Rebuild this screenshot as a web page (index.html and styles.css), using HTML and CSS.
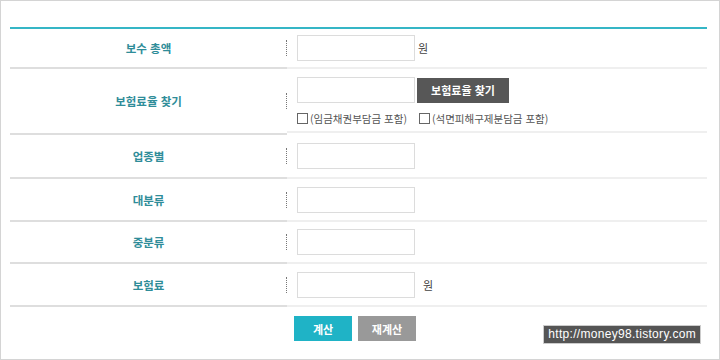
FILE: index.html
```html
<!DOCTYPE html>
<html lang="ko">
<head>
  <meta charset="UTF-8" />
  <title>보험료 계산</title>
  <link rel="stylesheet" href="styles.css">
</head>
<body>
  <div class="frame">
    <div class="calc">
      <div class="row r1">
        <div class="th">보수 총액</div>
        <div class="td"><input type="text" class="inp"><span class="unit">원</span></div>
      </div>
      <div class="row r2">
        <div class="th">보험료율 찾기</div>
        <div class="td">
          <div class="line"><input type="text" class="inp"><button type="button" class="find-btn">보험료율 찾기</button></div>
          <div class="checks">
            <label class="chk"><input type="checkbox"><span>(임금채권부담금 포함)</span></label>
            <label class="chk"><input type="checkbox"><span>(석면피해구제분담금 포함)</span></label>
          </div>
        </div>
      </div>
      <div class="row r3">
        <div class="th">업종별</div>
        <div class="td"><input type="text" class="inp"></div>
      </div>
      <div class="row r4">
        <div class="th">대분류</div>
        <div class="td"><input type="text" class="inp"></div>
      </div>
      <div class="row r5">
        <div class="th">중분류</div>
        <div class="td"><input type="text" class="inp"></div>
      </div>
      <div class="row r6">
        <div class="th">보험료</div>
        <div class="td"><input type="text" class="inp"><span class="unit">원</span></div>
      </div>
      <div class="btns">
        <button type="button" class="btn calc-btn">계산</button>
        <button type="button" class="btn reset-btn">재계산</button>
      </div>
    </div>
    <div class="mark">http://money98.tistory.com</div>
  </div>
</body>
</html>
```

FILE: styles.css
```css
body{margin:0;background:#fff;font-family:"Noto Sans CJK KR","Noto Sans",sans-serif}
.frame{position:relative;width:720px;height:360px;box-sizing:border-box;border:1px solid #d4d4d4;padding:26px 12px 0 9px}
.calc{border-top:2px solid #35b6c6}
.row{display:flex}
.th{width:277px;display:flex;align-items:center;justify-content:center;font-size:11.5px;font-weight:bold;color:#2f8d99;border-bottom:2px solid #dedede;position:relative}
.th::after{content:"";position:absolute;right:0;top:50%;height:16px;margin-top:-8px;border-right:1px dotted #777}
.td{flex:1;display:flex;flex-direction:column;justify-content:center;padding-left:10px;border-bottom:2px solid #efefef}
.r1 .th,.r1 .td{height:38px}
.r2 .th,.r2 .td{height:64px}
.r3 .th,.r3 .td{height:42px}
.r4 .th,.r4 .td{height:41px}
.r5 .th,.r5 .td{height:40px}
.r6 .th,.r6 .td{height:41px}
.r1 .td,.r6 .td,.r3 .td,.r4 .td,.r5 .td{flex-direction:row;align-items:center;justify-content:flex-start}
.r2 .td{justify-content:flex-start;padding-top:8px;box-sizing:border-box}
.inp{width:118px;height:26px;box-sizing:border-box;border:1px solid #dcdcdc;margin:0;padding:0 4px}
.unit{font-size:11px;color:#444;margin-left:3px}
.r6 .unit{margin-left:8px}
.line{display:flex;align-items:center}
.find-btn{height:25px;width:92px;margin-left:2px;border:none;background:#575757;color:#fff;font:bold 11px "Noto Sans CJK KR",sans-serif;padding:0}
.checks{display:flex;margin-top:8px;gap:12px}
.chk{display:flex;align-items:center;font-size:10.5px;color:#555}
.chk input{width:11px;height:11px;margin:0 2px 0 0;appearance:none;border:1px solid #666;background:#fff}
.btns{display:flex;gap:6px;padding:9px 0 0 284px}
.btn{height:25px;width:58px;border:none;color:#fff;font:bold 11px "Noto Sans CJK KR",sans-serif;padding:0}
.calc-btn{background:#1fb3c6}
.reset-btn{background:#999}
.mark{position:absolute;right:18px;bottom:15px;background:#555;color:#fff;font:12px "Liberation Sans",sans-serif;padding:1px 4px 2px;border:1px solid #ccc;letter-spacing:.3px}
```
